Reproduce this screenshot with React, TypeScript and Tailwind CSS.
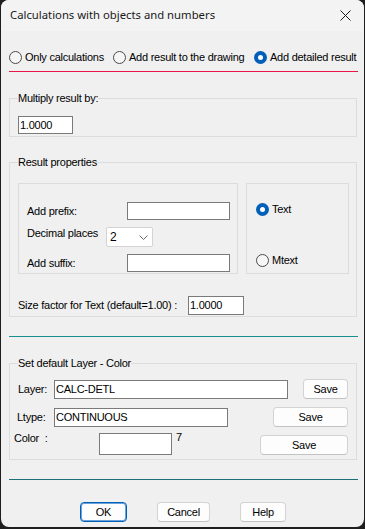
import React from 'react'

function Radio({ checked }: { checked?: boolean }) {
  return checked ? (
    <span className="w-[13px] h-[13px] rounded-full bg-[#005fb8] flex items-center justify-center shrink-0">
      <span className="w-[5px] h-[5px] rounded-full bg-white" />
    </span>
  ) : (
    <span className="w-[13px] h-[13px] rounded-full border border-[#4a4a4a] bg-[#f6f6f6] shrink-0" />
  )
}

function TextBox({ value, className }: { value?: string; className: string }) {
  return (
    <div className={`bg-white border border-[#7a7a7a] flex items-center pl-[1px] leading-[13px] ${className}`}>
      {value}
    </div>
  )
}

function Button({ label, className, focused }: { label: string; className: string; focused?: boolean }) {
  return (
    <div
      className={`flex items-center justify-center rounded-[4px] bg-[#fdfdfd] leading-[13px] ${
        focused ? 'border border-[#005fb8] shadow-[inset_0_0_0_1px_#6aa3d9]' : 'border border-[#d3d3d3] border-b-[#c2c2c2]'
      } ${className}`}
    >
      {label}
    </div>
  )
}

export default function App() {
  return (
    <div className="w-[365px] h-[529px] bg-[#1e1e1e] pl-[1px] overflow-hidden">
      <div className="w-[363px] h-[527px] rounded-[8px] bg-[#f0f0f0] overflow-hidden whitespace-nowrap text-black text-[11px] tracking-[-0.25px] font-['Liberation_Sans',Arial,sans-serif]">
        {/* Title bar */}
        <div className="h-[31px] bg-[#f3f3f3] flex items-center justify-between pl-[9px] pr-[10px]">
          <span className="text-[11.3px] tracking-normal text-[#1a1a1a] font-['Noto_Sans',sans-serif]">Calculations with objects and numbers</span>
          <svg width="11" height="11" viewBox="0 0 11 11" className="mr-[3px]">
            <path d="M0.5 0.5 L10.5 10.5 M10.5 0.5 L0.5 10.5" stroke="#1a1a1a" strokeWidth="1" />
          </svg>
        </div>

        <div className="pl-[8px] w-[358px]">
          {/* Mode radios */}
          <div className="mt-[19px] h-[14px] flex items-center">
            <div className="w-[104px] flex items-center gap-[3px]">
              <Radio />
              <span>Only calculations</span>
            </div>
            <div className="w-[141px] flex items-center gap-[3px]">
              <Radio />
              <span>Add result to the drawing</span>
            </div>
            <div className="flex items-center gap-[3px]">
              <Radio checked />
              <span>Add detailed result</span>
            </div>
          </div>
          <div className="mt-[7px] h-px w-[349px] bg-[#e8174a]" />

          {/* Multiply */}
          <fieldset className="mt-[20px] w-[348px] border border-[#dcdcdc] pb-[2px]">
            <legend className="ml-[8px] leading-[12px]">Multiply result by:</legend>
            <TextBox value="1.0000" className="mt-[12px] ml-[8px] w-[55px] h-[18px]" />
          </fieldset>

          {/* Result properties */}
          <fieldset className="mt-[19px] w-[348px] border border-[#dcdcdc] pb-[1px]">
            <legend className="ml-[8px] leading-[12px]">Result properties</legend>
            <div className="mt-[15px] ml-[8px] flex gap-[8px]">
              <div className="w-[220px] h-[91px] border border-[#dcdcdc] pl-[8px] pt-[18px]">
                <div className="flex items-center">
                  <span className="w-[100px]">Add prefix:</span>
                  <TextBox className="w-[103px] h-[18px]" />
                </div>
                <div className="mt-[7px] flex items-start">
                  <span className="w-[79px] leading-[13px]">Decimal places</span>
                  <div className="w-[47px] h-[20px] bg-white border border-[#d3d3d3] rounded-[2px] flex items-center justify-between pl-[3px] pr-[4px] text-[12px]">
                    <span>2</span>
                    <svg width="9" height="5" viewBox="0 0 9 5">
                      <path d="M0.5 0.5 L4.5 4.5 L8.5 0.5" stroke="#666" strokeWidth="1" fill="none" />
                    </svg>
                  </div>
                </div>
                <div className="mt-[7px] flex items-center">
                  <span className="w-[100px]">Add suffix:</span>
                  <TextBox className="w-[103px] h-[18px]" />
                </div>
              </div>
              <div className="w-[103px] h-[91px] border border-[#dcdcdc] pl-[9px] pt-[18px]">
                <div className="h-[14px] flex items-center gap-[3px]">
                  <Radio checked />
                  <span>Text</span>
                </div>
                <div className="mt-[37px] h-[14px] flex items-center gap-[3px]">
                  <Radio />
                  <span>Mtext</span>
                </div>
              </div>
            </div>
            <div className="mt-[22px] ml-[8px] flex items-center">
              <span className="w-[170px]">Size factor for Text (default=1.00) :</span>
              <TextBox value="1.0000" className="w-[56px] h-[19px]" />
            </div>
          </fieldset>

          <div className="mt-[19px] h-px w-[349px] bg-[#17918f]" />

          {/* Layer - Color */}
          <fieldset className="mt-[20px] w-[348px] border border-[#dcdcdc] pb-[4px]">
            <legend className="ml-[8px] leading-[12px]">Set default Layer - Color</legend>
            <div className="mt-[10px] ml-[8px] h-[20px] flex items-center">
              <span className="w-[36px]">Layer:</span>
              <TextBox value="CALC-DETL" className="w-[234px] h-[19px]" />
              <Button label="Save" className="ml-[15px] w-[45px] h-[20px]" />
            </div>
            <div className="mt-[8px] ml-[7px] h-[20px] flex items-center">
              <span className="w-[37px]">Ltype:</span>
              <TextBox value="CONTINUOUS" className="w-[174px] h-[19px]" />
              <Button label="Save" className="ml-[45px] w-[75px] h-[20px]" />
            </div>
            <div className="mt-[6px] ml-[4px] h-[22px] flex items-start">
              <span className="w-[85px] leading-[13px] mt-[-1px]">Color&nbsp;&nbsp;:</span>
              <TextBox className="w-[73px] h-[22px]" />
              <span className="ml-[4px] w-[84px] leading-[13px] mt-[-2px]">7</span>
              <Button label="Save" className="mt-[2px] w-[88px] h-[20px]" />
            </div>
          </fieldset>

          <div className="mt-[19px] h-px w-[349px] bg-[#1d6f78]" />

          {/* Dialog buttons */}
          <div className="mt-[22px] flex">
            <Button label="OK" focused className="ml-[71px] w-[47px] h-[20px]" />
            <Button label="Cancel" className="ml-[30px] w-[53px] h-[20px]" />
            <Button label="Help" className="ml-[30px] w-[46px] h-[20px]" />
          </div>
        </div>
      </div>
    </div>
  )
}
